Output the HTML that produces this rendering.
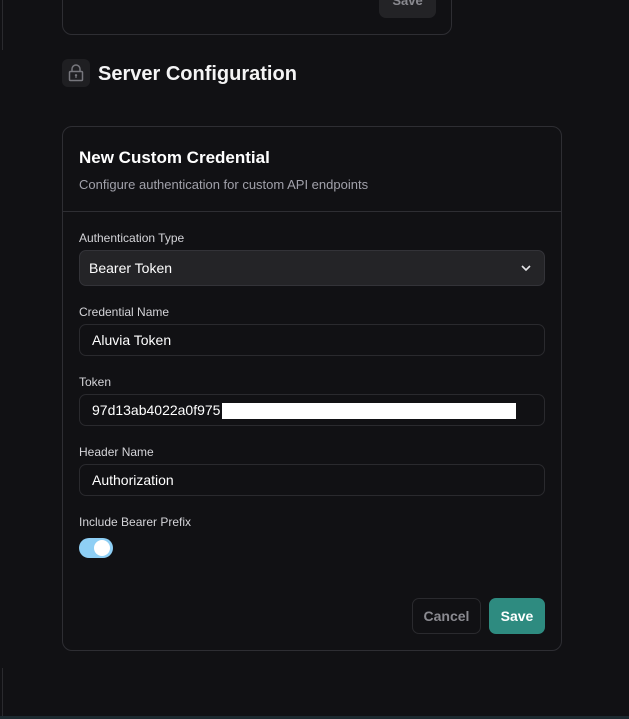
<!DOCTYPE html>
<html><head><style>
*{box-sizing:border-box;margin:0;padding:0}
body{width:629px;height:719px;background:#111114;font-family:"Liberation Sans",sans-serif;color:#fff;position:relative;overflow:hidden}
.abs{position:absolute}
.lbl{position:absolute;left:79px;font-size:12px;color:#d4d4d8}
.inp{position:absolute;left:79px;width:466px;height:32px;border:1px solid #2a2a2e;border-radius:7px;background:#111114;font-size:14px;padding-left:12px;line-height:30px;color:#fff}
</style></head><body>
<div class="abs" style="left:2px;top:0;width:1px;height:50px;background:#2a2a2e"></div>
<div class="abs" style="left:2px;top:668px;width:1px;height:48px;background:#2a2a2e"></div>
<div class="abs" style="left:0;top:716px;width:629px;height:3px;background:#1c2a30"></div>
<div class="abs" style="left:62px;top:-20px;width:390px;height:55px;border:1px solid #2e2e33;border-radius:10px"></div>
<div class="abs" style="left:379px;top:-12px;width:57px;height:30px;background:#232326;border-radius:7px;color:#8a8a90;font-weight:bold;font-size:13px;text-align:center;overflow:hidden"><span style="position:absolute;left:0;right:0;top:5px">Save</span></div>
<div class="abs" style="left:62px;top:59px;width:28px;height:28px;background:#1f1f22;border-radius:6px">
<svg width="28" height="28" viewBox="0 0 28 28"><rect x="7.5" y="12.5" width="13" height="9" rx="1" fill="none" stroke="#77777d" stroke-width="1.5"/><path d="M10 12.5V10a4 4 0 0 1 8 0v2.5" fill="none" stroke="#77777d" stroke-width="1.5"/><circle cx="14" cy="16.3" r="1.2" fill="#77777d"/><path d="M14 17v2" stroke="#77777d" stroke-width="1.2"/></svg></div>
<div class="abs" style="left:98px;top:63px;font-size:20px;font-weight:bold;color:#f4f4f5">Server Configuration</div>
<div class="abs" style="left:62px;top:126px;width:500px;height:525px;border:1px solid #2e2e33;border-radius:10px"></div>
<div class="abs" style="left:79px;top:148px;font-size:17px;font-weight:bold">New Custom Credential</div>
<div class="abs" style="left:79px;top:177px;font-size:13px;color:#a1a1aa">Configure authentication for custom API endpoints</div>
<div class="abs" style="left:63px;top:211px;width:498px;height:1px;background:#2e2e33"></div>
<div class="lbl" style="top:231px">Authentication Type</div>
<div class="inp" style="top:250px;height:36px;line-height:34px;background:#242427;border-color:#333338;padding-left:9px">Bearer Token
<svg class="abs" style="right:12px;top:12px" width="12" height="10" viewBox="0 0 12 10"><path d="M2 3l4 4 4-4" fill="none" stroke="#e4e4e7" stroke-width="1.6"/></svg></div>
<div class="lbl" style="top:305px">Credential Name</div>
<div class="inp" style="top:324px">Aluvia Token</div>
<div class="lbl" style="top:375px">Token</div>
<div class="inp" style="top:394px">97d13ab4022a0f975<span style="position:absolute;left:142px;top:8px;width:294px;height:16px;background:#fff"></span></div>
<div class="lbl" style="top:445px">Header Name</div>
<div class="inp" style="top:464px">Authorization</div>
<div class="lbl" style="top:515px">Include Bearer Prefix</div>
<div class="abs" style="left:79px;top:538px;width:34px;height:20px;background:#8ecff5;border-radius:10px"><div class="abs" style="left:15px;top:2px;width:16px;height:16px;background:#fff;border-radius:50%"></div></div>
<div class="abs" style="left:412px;top:598px;width:69px;height:36px;border:1px solid #2a2a2e;border-radius:7px;color:#8a8a90;font-weight:bold;font-size:14px;text-align:center;line-height:34px">Cancel</div>
<div class="abs" style="left:489px;top:598px;width:56px;height:36px;background:#2e8b80;border-radius:7px;color:#fff;font-weight:bold;font-size:14px;text-align:center;line-height:36px">Save</div>
</body></html>
